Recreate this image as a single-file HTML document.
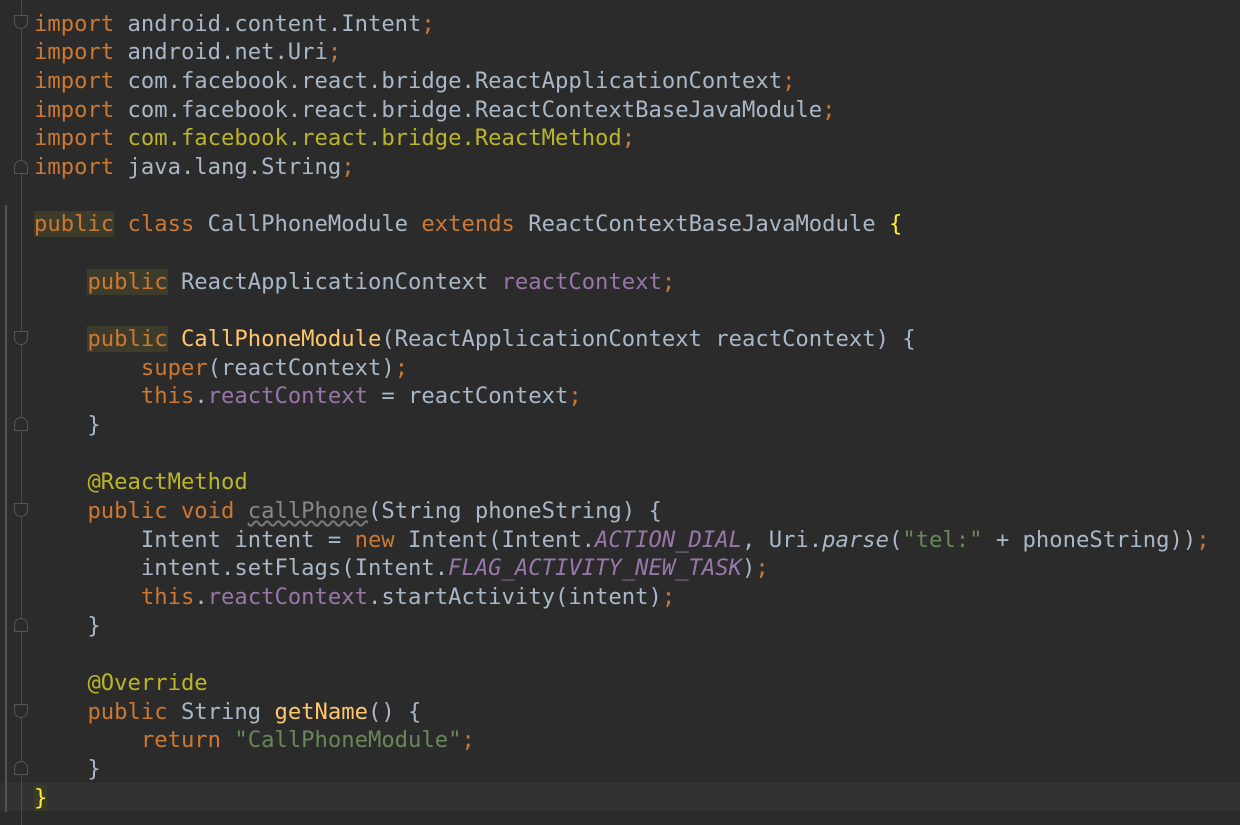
<!DOCTYPE html>
<html><head><style>
body{margin:0;width:1240px;height:825px;background:#2b2b2b;overflow:hidden;position:relative;font-family:"DejaVu Sans Mono","Liberation Mono",monospace;font-size:22.2px;color:#a9b7c6}
.code{position:absolute;left:34px;top:9.5px;white-space:pre;line-height:28.67px}
.k{color:#cc7832}.p{color:#9876aa}.s{color:#6a8759}.a{color:#bbb529}.f{color:#ffc66d}.y{color:#bbb529}
.i{font-style:italic}
.hl{background:#3d3b2a}
.cur{position:absolute;left:0;top:783px;width:1240px;height:28px;background:#323232}
.gl{position:absolute;left:21px;top:0;width:1px;height:825px;background:#4a4a4a}
.vl{position:absolute;left:5px;top:205px;width:2px;height:607px;background:#4b5a50}
.fold{position:absolute;left:14px;width:14px;height:14px;border:1px solid #555;box-sizing:border-box;background:#2b2b2b}
.sq{text-decoration:underline wavy #777;color:#888}
</style></head><body>
<div class="cur"></div>
<div class="gl"></div>
<div class="vl"></div>
<div class="fold" style="top:15px;border-radius:0 0 7px 7px"></div>
<div class="fold" style="top:160px;border-radius:7px 7px 0 0"></div>
<div class="fold" style="top:331px;border-radius:0 0 7px 7px"></div>
<div class="fold" style="top:417px;border-radius:7px 7px 0 0"></div>
<div class="fold" style="top:503px;border-radius:0 0 7px 7px"></div>
<div class="fold" style="top:618px;border-radius:7px 7px 0 0"></div>
<div class="fold" style="top:704px;border-radius:0 0 7px 7px"></div>
<div class="fold" style="top:761px;border-radius:7px 7px 0 0"></div>
<div class="code"><span class="k">import</span> android.content.Intent<span class="k">;</span>
<span class="k">import</span> android.net.Uri<span class="k">;</span>
<span class="k">import</span> com.facebook.react.bridge.ReactApplicationContext<span class="k">;</span>
<span class="k">import</span> com.facebook.react.bridge.ReactContextBaseJavaModule<span class="k">;</span>
<span class="k">import</span> <span class="y">com.facebook.react.bridge.ReactMethod</span><span class="k">;</span>
<span class="k">import</span> java.lang.String<span class="k">;</span>

<span class="k hl">public</span> <span class="k">class</span> CallPhoneModule <span class="k">extends</span> ReactContextBaseJavaModule <span style="color:#ffef28">{</span>

    <span class="k hl">public</span> ReactApplicationContext <span class="p">reactContext</span><span class="k">;</span>

    <span class="k hl">public</span> <span class="f">CallPhoneModule</span>(ReactApplicationContext reactContext) {
        <span class="k">super</span>(reactContext)<span class="k">;</span>
        <span class="k">this</span>.<span class="p">reactContext</span> = reactContext<span class="k">;</span>
    }

    <span class="a">@ReactMethod</span>
    <span class="k">public void</span> <span class="sq">callPhone</span>(String phoneString) {
        Intent intent = <span class="k">new</span> Intent(Intent.<span class="p i">ACTION_DIAL</span>, Uri.<span class="i">parse</span>(<span class="s">"tel:"</span> + phoneString))<span class="k">;</span>
        intent.setFlags(Intent.<span class="p i">FLAG_ACTIVITY_NEW_TASK</span>)<span class="k">;</span>
        <span class="k">this</span>.<span class="p">reactContext</span>.startActivity(intent)<span class="k">;</span>
    }

    <span class="a">@Override</span>
    <span class="k">public</span> String <span class="f">getName</span>() {
        <span class="k">return</span> <span class="s">"CallPhoneModule"</span><span class="k">;</span>
    }
<span style="color:#ffef28;background:#3b3b2b">}</span></div>
</body></html>
